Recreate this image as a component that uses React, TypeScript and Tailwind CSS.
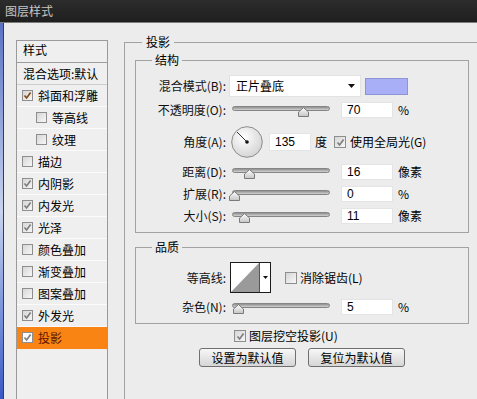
import React from "react";

type Item = { t: string; on?: boolean; sub?: boolean; sel?: boolean; dark?: boolean };

const items: Item[] = [
  { t: "斜面和浮雕", on: true, dark: true },
  { t: "等高线", sub: true },
  { t: "纹理", sub: true },
  { t: "描边" },
  { t: "内阴影", on: true },
  { t: "内发光", on: true },
  { t: "光泽", on: true },
  { t: "颜色叠加" },
  { t: "渐变叠加" },
  { t: "图案叠加" },
  { t: "外发光", on: true },
  { t: "投影", on: true, sel: true },
];

const Box = ({ on, big, dark, white }: { on?: boolean; big?: boolean; dark?: boolean; white?: boolean }) => (
  <span
    className={`flex shrink-0 items-center justify-center border border-[#8e8e8e] ${
      big ? "h-[12px] w-[12px]" : "h-[11px] w-[11px]"
    } ${white ? "bg-[#fafafa]" : "bg-gradient-to-br from-[#d6d6d6] to-[#f7f7f7]"}`}
  >
    {on && (
      <svg width="9" height="9" viewBox="0 0 9 9">
        <path d="M1.5 4.5 L3.6 7 L7.6 1.6" fill="none" stroke={dark ? "#8a4a12" : "#7e7e7e"} strokeWidth="1.7" />
      </svg>
    )}
  </span>
);

const Slider = ({ at }: { at: number }) => (
  <div className="relative ml-[3px] h-[16px] w-[104px] shrink-0">
    <div className="absolute left-[3px] right-[3px] top-[4px] h-[5px] rounded-full border border-[#858585] bg-gradient-to-b from-[#8f8f8f] to-[#d2d2d2]" />
    <svg className="absolute top-[5px]" style={{ left: at - 5 }} width="11" height="10" viewBox="0 0 11 10">
      <defs>
        <linearGradient id="th" x1="0" y1="0" x2="0" y2="1">
          <stop offset="0" stopColor="#ffffff" />
          <stop offset="1" stopColor="#c4c4c4" />
        </linearGradient>
      </defs>
      <path d="M0.5 9.5 L0.5 5 L5.5 0.6 L10.5 5 L10.5 9.5 Z" fill="url(#th)" stroke="#7a7a7a" />
    </svg>
  </div>
);

const Field = ({ v, w = "w-[52px]", ml = "ml-[8px]", h = "h-[16px]" }: { v: string; w?: string; ml?: string; h?: string }) => (
  <div className={`${ml} ${w} ${h} flex shrink-0 items-center border border-[#e4e4e4] bg-white pl-[5px] font-['Liberation_Sans',sans-serif] text-[12px] text-black`}>
    {v}
  </div>
);

const Label = ({ t }: { t: string }) => <div className="w-[90px] shrink-0 text-right text-[12px] text-[#111]">{t}</div>;

const SliderRow = ({ label, at, v, unit }: { label: string; at: number; v: string; unit: string }) => (
  <div className="mt-[6px] flex h-[16px] items-center">
    <Label t={label} />
    <Slider at={at} />
    <Field v={v} />
    <span className="ml-[5px] text-[12px] text-black">{unit}</span>
  </div>
);

const Dial = () => (
  <svg className="ml-[5px] shrink-0" width="32" height="32" viewBox="0 0 32 32">
    <defs>
      <radialGradient id="dg" cx="0.4" cy="0.35" r="0.7">
        <stop offset="0" stopColor="#ffffff" />
        <stop offset="1" stopColor="#d2d2d2" />
      </radialGradient>
    </defs>
    <circle cx="16" cy="16" r="15.3" fill="url(#dg)" stroke="#8c8c8c" />
    <line x1="16" y1="16" x2="6" y2="6" stroke="#333" strokeWidth="1" />
    <circle cx="16" cy="16" r="1.8" fill="#111" />
  </svg>
);

const Btn = ({ t }: { t: string }) => (
  <div className="flex h-[19px] w-[97px] items-center justify-center rounded-[3px] border border-[#6f6f6f] bg-gradient-to-b from-[#f7f7f7] to-[#d6d6d6] text-[12px] text-black">
    {t}
  </div>
);

export default function App() {
  return (
    <div className="h-[399px] w-[477px] overflow-hidden bg-[#ececec] font-['Noto_Sans_CJK_SC',sans-serif] leading-[16px]">
      <div className="flex h-[23px] items-center border-b border-[#7c7c7c] bg-gradient-to-b from-[#2c2c2c] to-[#1f1f1f] pl-[5px] text-[12px] text-[#c6c6c6]">
        图层样式
      </div>
      <div className="flex h-[376px]">
        <div className="w-[3px] bg-gradient-to-b from-[#5a72c4] via-[#c9d3ef] to-[#3a58c4]" />
        <div className="w-[1px] bg-[#3c3c3c]" />
        <div className="flex flex-1">
          <div className="ml-[12px] mt-[17px] flex h-[400px] w-[92px] shrink-0 flex-col border border-[#9a9a9a] bg-[#efefef] text-[12px] text-black">
            <div className="flex h-[22px] items-center border-b border-[#9c9c9c] pb-[3px] pl-[6px]">样式</div>
            <div className="flex h-[22px] items-center border-b border-[#cdcdcd] pl-[6px]">混合选项:默认</div>
            {items.map((it) => (
              <div
                key={it.t}
                className={`flex h-[22px] items-center gap-[5px] border-b ${
                  it.sel ? "border-[#f98414] bg-[#f98414] text-[#5e1400]" : "border-[#fbfbfb]"
                } ${it.sub ? "pl-[19px]" : "pl-[5px]"}`}
              >
                <Box on={it.on} dark={it.dark} white={it.sel} />
                <span>{it.t}</span>
              </div>
            ))}
          </div>

          <fieldset className="ml-[16px] mt-[11px] flex-1 border-l border-t border-[#a2a2a2] p-0">
            <legend className="ml-[17px] px-[4px] text-[12px] text-black">投影</legend>
            <div className="pl-[10px]">
              <fieldset className="mt-[2px] w-[334px] border border-[#a2a2a2] p-0 pb-[8px]">
                <legend className="ml-[16px] px-[3px] text-[12px] text-black">结构</legend>
                <div className="mt-[7px] flex h-[22px] items-center">
                  <Label t="混合模式(B):" />
                  <div className="ml-[3px] flex h-[22px] w-[132px] items-center justify-between border border-[#e2e2e2] bg-white pl-[6px] pr-[5px] text-[12px] text-black">
                    <span>正片叠底</span>
                    <svg width="7" height="4" viewBox="0 0 7 4">
                      <path d="M0 0 H7 L3.5 4 Z" fill="#111" />
                    </svg>
                  </div>
                  <div className="ml-[4px] h-[17px] w-[43px] border border-[#8d95d6] bg-[#a8aff6]" />
                </div>
                <div className="mt-[5px] flex h-[16px] items-center">
                  <Label t="不透明度(O):" />
                  <Slider at={74} />
                  <Field v="70" />
                  <span className="ml-[5px] text-[12px] text-black">%</span>
                </div>
                <div className="mt-[8px] flex h-[32px] items-center">
                  <Label t="角度(A):" />
                  <Dial />
                  <Field v="135" w="w-[42px]" ml="ml-[6px]" h="h-[18px]" />
                  <span className="ml-[4px] text-[12px] text-black">度</span>
                  <span className="ml-[7px]">
                    <Box on big />
                  </span>
                  <span className="ml-[4px] text-[12px] text-black">使用全局光(G)</span>
                </div>
                <SliderRow label="距离(D):" at={20} v="16" unit="像素" />
                <SliderRow label="扩展(R):" at={5} v="0" unit="%" />
                <SliderRow label="大小(S):" at={15} v="11" unit="像素" />
              </fieldset>

              <fieldset className="mt-[6px] w-[334px] border border-[#a2a2a2] p-0 pb-[8px]">
                <legend className="ml-[16px] px-[3px] text-[12px] text-black">品质</legend>
                <div className="mt-[7px] flex h-[31px] items-center">
                  <Label t="等高线:" />
                  <div className="ml-[4px] flex h-[31px] w-[41px] shrink-0 border border-[#1c1c1c] bg-white">
                    <svg width="28" height="29" viewBox="0 0 28 29">
                      <polygon points="0,29 28,0 28,29" fill="#9a9a9a" />
                    </svg>
                    <div className="flex flex-1 items-center justify-center border-l border-[#555]">
                      <svg width="5" height="3" viewBox="0 0 5 3">
                        <path d="M0 0 H5 L2.5 3 Z" fill="#111" />
                      </svg>
                    </div>
                  </div>
                  <span className="ml-[14px]">
                    <Box big />
                  </span>
                  <span className="ml-[3px] text-[12px] text-black">消除锯齿(L)</span>
                </div>
                <SliderRow label="杂色(N):" at={9} v="5" unit="%" />
              </fieldset>

              <div className="mt-[4px] flex h-[16px] items-center pl-[99px]">
                <Box on big />
                <span className="ml-[3px] text-[12px] text-black">图层挖空投影(U)</span>
              </div>
              <div className="mt-[4px] flex w-[334px] justify-center gap-[12px]">
                <Btn t="设置为默认值" />
                <Btn t="复位为默认值" />
              </div>
            </div>
          </fieldset>
        </div>
      </div>
    </div>
  );
}
